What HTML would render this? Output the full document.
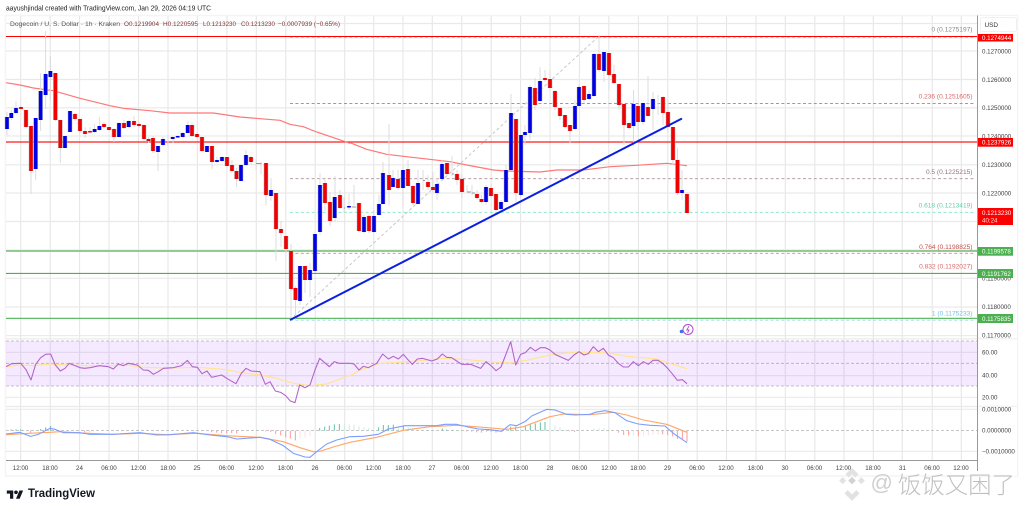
<!DOCTYPE html>
<html><head><meta charset="utf-8"><style>
html,body{margin:0;padding:0;background:#fff;width:1024px;height:509px;overflow:hidden}
svg{display:block;filter:blur(.35px)}
text{font-family:"Liberation Sans","Noto Sans CJK SC",sans-serif}
.a{font-size:6.2px;fill:#3f3f3f}
.t{font-size:6.2px;fill:#3f3f3f;text-anchor:middle}
.f{font-size:6.6px;text-anchor:end}
.w{font-size:6.2px;fill:#fff}
</style></head><body>
<svg width="1024" height="509" viewBox="0 0 1024 509" xmlns="http://www.w3.org/2000/svg">
<defs>
<path id="r" d="M21 107V109M26 110V127M31 126V171M55.4 73V120M60.3 120V148M75 114V119M80 119V131M85 131V134M90 131V132.5M104 124V127M109 127V130M114 129V137M124 123V128M134 121V125M139 124V126M144 125V139M148.5 139V141M153 138V151M192 125V136M197 134V137M202 137V151M212 146V162M227 157V166M232 165V171M236.5 171V179M251 157V162M266 163V195M276 193V229M281 229V233M286 236V249M291 251V289M295.5 288V300M305 266V280M325 183V203M330 202V221M340 195V208M359 203V231M369 216V231M389 175V190M398 179V188M408 169V186M413 186V203M428 182V187M433 187V190M447 163V174M457 174V180M462 179V192M477 194V198M481.5 199V202M491 188V196M496 194V210M516 119V193M535 88V105M545 78V80M550 79V88M555 91V107M560 108V116M565 115V127M570 125V131M584 86V100M599 54V70M609 53V75M614 74V83M619 84V105M624 104V125M629 123V128M638 106V122M648 107V116M663 97V113M668 112V127M673 127V160M677.5 160V193M687 194V213"/>
<path id="b" d="M7 117V129M11.3 113V118M16 108V113M35.7 118V169M40.6 91V120M45.6 74V95M50.4 71V77M65 136V148M70 111V132M94.6 129V132M99.4 126V130M119 123V137M128.7 121V127M158 146V152M163 139V145M172.7 137V139M177.7 136V137.5M182.7 133V137M187.7 125V133M207 146V152M217 160V162M222 157V161M241 165V181M246 155V165M271 190V196M300 266V301M310 270V280M315 234V271M320 185V232M334.7 197V218M349 206V207.5M364 217V232M374 216V232M379 204V215M383 173V204M393 178V187M403 170V188M418 183V204M437 184V193M442 164V179M486 187V202M501 202V209M506 170V202M511 113V170M521 135V195M525 132V135M530 87V133M540 81V101M575 106V129M579 87V106M589 94V99M594 54V96M604 52V71M633.5 104V126M643 103V122M653 99V109M682 190V193"/>
</defs>

<!-- frame -->
<rect x="5.5" y="15.5" width="1012" height="460.5" fill="#fff" stroke="#f4f4f4" stroke-width="1.5"/>

<!-- grid -->
<path fill="none" stroke="#e6e6e6" stroke-width="1.1" d="M20.7 16V460M50.2 16V460M79.6 16V460M109 16V460M138.5 16V460M168 16V460M197.4 16V460M226.9 16V460M256.3 16V460M285.8 16V460M315.2 16V460M344.7 16V460M373.7 16V460M403 16V460M432.3 16V460M461.8 16V460M491.2 16V460M520.6 16V460M550 16V460M579.4 16V460M608.8 16V460M638.4 16V460M667.8 16V460M697.2 16V460M726.5 16V460M756 16V460M785.3 16V460M814.8 16V460M844 16V460M873.3 16V460M902.3 16V460M932.2 16V460M961.3 16V460"/>
<path fill="none" stroke="#e9e9e9" stroke-width="1.2" d="M6 23.5H977M6 51H977M6 79.5H977M6 107.8H977M6 136H977M6 164.8H977M6 193H977M6 221.5H977M6 250H977M6 278.3H977M6 307H977M6 335.7H977M6 338.8H977M6 352.3H977M6 375.7H977M6 397.3H977M6 406.5H977M6 409.3H977M6 451.3H977"/>

<!-- RSI band -->
<rect x="6" y="341" width="971" height="45" fill="#a030ff" fill-opacity=".105"/>
<path fill="none" stroke="#b9a6c4" stroke-width=".8" stroke-dasharray="3 2" d="M6 341H977M6 363.3H977M6 386H977"/>
<path fill="none" stroke="#b5b5b5" stroke-width=".8" stroke-dasharray="3 2" d="M6 430.5H977"/>

<!-- Fib lines -->
<g fill="none" stroke-width=".9" stroke-dasharray="3 2.4">
<path stroke="#aaa" d="M290 37H975"/>
<path stroke="#e57b7b" d="M290 103.5H975"/>
<path stroke="#b08f97" d="M290 178.7H975"/>
<path stroke="#7fe3c4" d="M290 212.3H975"/>
<path stroke="#ee7f7f" d="M290 253.3H975"/>
<path stroke="#9fd5ef" d="M290 320.2H975"/>
<path stroke="#c2c2c2" d="M290 320L598 37"/>
</g>

<!-- Horizontal levels -->
<path fill="none" stroke="#f00" stroke-width="1.1" d="M6 36.5H977"/>
<path fill="none" stroke="#fa1f1f" stroke-width="1.3" d="M6 142H977"/>
<path fill="none" stroke="#85c588" stroke-width="1.8" d="M6 251H977"/>
<path fill="none" stroke="#4caf50" stroke-width="1.1" d="M6 273.4H977"/>
<path fill="none" stroke="#62bb66" stroke-width="1.2" d="M6 318.4H977"/>

<!-- MA -->
<g fill="none" stroke="#f77">
<polyline transform="scale(.33333)" stroke-width="3.6" points="18,248 60,255 100,264 160,272 240,295 330,317 370,325 450,332 510,339 640,339 720,351 840,361 870,373 910,380 950,396 1050,430"/>
<polyline transform="translate(350,20) scale(.33333)" stroke-width="3.6" points="0,368 50,388 110,403 170,410 300,425 350,435 430,450 470,453 570,456 620,450 700,450 780,440 860,436 950,430 1011,437"/>
</g>

<!-- Wicks -->
<path fill="none" stroke="#dcdcdc" stroke-width="1" d="M7 112V135M11.3 110V120M16 101V114M21 105V110M26 110V128M31 126V194M35.7 118V180M40.6 73V131M45.6 31V109M50.4 56V100M55.4 73V121M60.3 120V163M65 136V148M70 111V132M75 113V121M80 119V133M85 127V138M90 127V133M94.6 124V133M99.4 117V131M104 122V128M109 127V131M114 128V142M119 122V137M124 120V129M129 120V128M134 116V127M139 122V128M144 124V140M148.5 137V143M153 136V153M158 146V171M163 137V146M168 135V146M173 136V143M178 135V138M183 132V138M188 121V133M192 123V137M197 132V138M202 137V152M207 146V152M212 146V169M217 157V163M222 156V162M227 157V168M232 160V172M236.5 168V187M241 164V181M246 150V166M251 156V165M256 159V170M261 162V174M266 163V205M271 178V201M276 193V261M281 221V247M286 243V253M291 244V320M295.5 286V320M300 266V305M305 266V293M310 263V297M315 234V272M320 173V235M325 179V211M330 192V226M335 176V222M340 190V209M344 197V213M349 194V210M354 185V206M359 203V232M364 215V233M369 215V233M374 210V233M379 195V215M383 162V204M389 124V205M393 170V187M398 170V190M403 165V207M408 160V186M413 185V205M418 170V204M423 170V190M428 175V190M433 172V192M437 178V200M442 160V180M447 163V175M452 156V176M457 170V185M462 175V198M467 185V192M472 185V195M477 190V200M481.5 195V203M486 185V205M491 185V198M496 194V211M501 200V210M506 165V202M511 94V170M516 119V202M521 135V196M525 125V145M530 85V140M535 78V110M540 67V102M545 70V82M550 70V90M555 90V110M560 108V120M565 115V128M570 125V143M575 100V130M579 85V107M584 85V103M589 90V100M594 53V97M599 35V72M604 52V82M609 53V90M614 65V84M619 84V110M624 104V145M629 123V130M633.5 90V146M638 105V130M643 103V125M648 76V117M653 92V130M658 95V115M663 96V125M668 100V133M673 127V165M677.5 148V195M682 170V200M687 192V213"/>
<path fill="none" stroke="#999" stroke-width="1" d="M256 163.5H261.5M344 208H345M352 207H356M452 174H454M467 192H471M472 193H475M423 180.5H425"/>

<!-- Candle edges & bodies -->
<use href="#r" fill="none" stroke="#a8a8a8" stroke-width="4.4"/>
<use href="#b" fill="none" stroke="#a8a8a8" stroke-width="4.4"/>
<use href="#r" fill="none" stroke="#f00000" stroke-width="3.5"/>
<use href="#b" fill="none" stroke="#0000e6" stroke-width="3.5"/>

<!-- Trend line -->
<path d="M290 320L682 118.5" fill="none" stroke="#0b1fe0" stroke-width="2"/>

<!-- Lightning icon -->
<circle cx="688" cy="329.5" r="5" fill="#fff" stroke="#b04cc8" stroke-width="1"/>
<circle cx="681.5" cy="331.5" r="1.8" fill="#3f6ff0"/>
<path d="M689 326.2L686.7 330H689L687.5 333" fill="none" stroke="#b04cc8" stroke-width=".9"/>

<!-- RSI -->
<g fill="none" stroke-linejoin="round">
<polyline transform="translate(0,335) scale(.33333)" stroke="#ffe58f" stroke-width="3.6" points="18,95 60,90 100,92 150,87 200,90 260,92 320,92 380,90 430,97 500,99 590,97 670,103 720,112 780,120 830,130 880,145 930,152 980,147 1020,132 1050,120"/>
<polyline transform="translate(350,335) scale(.33333)" stroke="#ffe58f" stroke-width="3.6" points="0,122 30,105 60,95 90,85 130,83 200,78 280,70 340,73 420,80 480,84 530,76 600,60 650,54 700,52 770,53 830,64 920,72 960,85 1011,101"/>
<polyline transform="translate(0,335) scale(.33333)" stroke="#b163c9" stroke-width="3.2" points="18,95 35,86 62,85 78,104 93,135 107,88 122,68 137,58 152,57 166,90 181,108 195,100 208,85 225,92 240,98 254,100 270,98 298,92 325,95 340,102 355,87 370,92 385,85 412,90 430,105 445,106 460,118 475,110 490,100 520,98 545,92 562,76 577,95 592,97 606,116 621,108 635,127 665,120 680,130 708,146 724,115 738,100 753,108 780,110 796,148 810,140 826,168 842,172 857,182 871,198 885,203 899,150 915,158 930,150 945,105 959,70 988,95 1003,80 1018,85 1050,85"/>
<polyline transform="translate(350,335) scale(.33333)" stroke="#b163c9" stroke-width="3.2" points="0,85 12,87 27,105 40,94 55,98 80,85 98,57 115,72 130,64 145,72 160,58 172,72 187,88 202,72 218,70 245,78 262,72 277,57 290,67 305,68 320,78 335,88 362,88 392,100 408,80 423,92 438,107 453,96 467,60 482,20 497,90 512,58 526,53 541,37 556,48 571,38 585,38 600,45 615,58 630,65 655,76 672,60 687,50 702,60 715,56 730,35 745,50 760,40 775,60 790,68 805,85 820,96 835,96 850,80 865,92 880,80 895,88 909,76 924,76 940,87 953,100 968,118 982,136 997,134 1011,146"/>
</g>

<!-- MACD histogram -->
<g transform="translate(0,335) scale(.33333)" fill="none" stroke-width="3">
<path stroke="#5cc4a8" d="M33 287V283M48 287V283M62 287V283M122 287V282M137 287V277M152 287V273M959 287V279M974 287V275M988 287V272M1003 287V268M1018 287V267"/>
<path stroke="#c8ece3" d="M1033 287V267M1048 287V269"/>
<path stroke="#f99" d="M92 287V295M254 287V292M269 287V290M635 287V292M650 287V293M665 287V294M680 287V295M695 287V294M710 287V295M797 287V289M812 287V291M827 287V297M842 287V301M857 287V307M871 287V311M886 287V316"/>
<path stroke="#fde0e0" d="M900 287V311M915 287V307M930 287V304M945 287V297"/>
</g>
<g transform="translate(350,335) scale(.33333)" fill="none" stroke-width="3">
<path stroke="#c8ece3" d="M12 287V269M27 287V274M42 287V277M56 287V279M145 287V274M175 287V277M188 287V279M512 287V277M600 287V263M615 287V272M630 287V277M732 287V280M747 287V280M762 287V279"/>
<path stroke="#5cc4a8" d="M86 287V277M100 287V270M115 287V270M130 287V269M160 287V274M277 287V281M290 287V284M306 287V285M482 287V275M497 287V275M526 287V275M541 287V269M556 287V265M571 287V262M585 287V261"/>
<path stroke="#f99" d="M350 287V289M365 287V290M380 287V292M394 287V293M409 287V290M423 287V291M438 287V293M453 287V289M645 287V288M659 287V289M674 287V291M806 287V293M821 287V300M836 287V302M865 287V304M938 287V298M953 287V300M968 287V304M982 287V312M997 287V312M1011 287V320"/>
<path stroke="#fde0e0" d="M850 287V302M880 287V302M895 287V302M909 287V300M924 287V299"/>
</g>

<!-- MACD lines -->
<g fill="none" stroke-linejoin="round">
<polyline transform="translate(0,335) scale(.33333)" stroke="#ffa769" stroke-width="3.4" points="18,299 90,295 150,292 180,290 240,294 340,298 420,295 500,299 590,295 680,302 780,307 850,320 900,338 940,350 960,349 1000,336 1050,322"/>
<polyline transform="translate(350,335) scale(.33333)" stroke="#ffa769" stroke-width="3.4" points="0,322 80,307 160,286 240,275 320,271 400,277 470,283 520,275 600,245 640,237 720,239 790,232 830,240 880,255 950,268 1011,292"/>
<polyline transform="translate(0,335) scale(.33333)" stroke="#7b9dff" stroke-width="3.2" points="18,297 60,292 92,304 115,298 150,280 165,283 190,293 240,293 270,298 340,298 420,293 470,300 510,299 580,293 630,300 680,305 710,312 780,307 810,313 850,332 880,355 915,366 930,367 950,350 980,327 1010,315 1050,305"/>
<polyline transform="translate(350,335) scale(.33333)" stroke="#7b9dff" stroke-width="3.2" points="0,305 40,304 85,298 115,282 165,272 260,272 285,268 320,268 350,275 385,282 420,284 455,289 480,269 500,272 525,260 545,243 590,223 615,225 650,238 675,240 720,238 735,232 765,227 795,233 830,257 865,267 900,271 945,273 970,295 1011,323"/>
</g>

<!-- Axes -->
<rect x="978" y="16" width="39" height="460" fill="#fff"/>
<path d="M977.5 15.5V471" stroke="#999" stroke-width="1" fill="none"/>
<path d="M6 460.5H977.5" stroke="#999" stroke-width="1" fill="none"/>
<path d="M978 338.8H1017M978 406.3H1017" stroke="#eee" stroke-width="1" fill="none"/>
<rect x="980.5" y="17.5" width="36" height="14" rx="2" fill="#fff" stroke="#f0f0f0"/>
<text x="984.5" y="27" font-size="6.4" fill="#333">USD</text>

<!-- Price labels -->
<g class="labels">
<text class="a" x="982" y="53.3">0.1270000</text>
<text class="a" x="982" y="81.8">0.1260000</text>
<text class="a" x="982" y="110">0.1250000</text>
<text class="a" x="982" y="138.3">0.1240000</text>
<text class="a" x="982" y="166.8">0.1230000</text>
<text class="a" x="982" y="195.3">0.1220000</text>
<text class="a" x="982" y="280.5">0.1190000</text>
<text class="a" x="982" y="308.8">0.1180000</text>
<text class="a" x="982" y="337.3">0.1170000</text>
<text class="a" x="982" y="354.5">60.00</text>
<text class="a" x="982" y="377.5">40.00</text>
<text class="a" x="982" y="399.5">20.00</text>
<text class="a" x="982" y="411.5">0.0010000</text>
<text class="a" x="982" y="432.6">0.0000000</text>
<text class="a" x="982" y="453.5">−0.0010000</text>
</g>
<rect x="978" y="34" width="35" height="7.5" fill="#f00"/>
<text class="w" x="982" y="40">0.1274944</text>
<rect x="978" y="138" width="35" height="8.7" fill="#f00"/>
<text class="w" x="982" y="144.6">0.1237926</text>
<rect x="978" y="208" width="35" height="17" fill="#f00"/>
<text class="w" x="982" y="215">0.1213230</text>
<text class="w" x="982" y="222.5" fill-opacity=".85">40:24</text>
<rect x="978" y="247" width="35" height="8.7" fill="#4caf50"/>
<text class="w" x="982" y="253.6">0.1199578</text>
<rect x="978" y="269" width="35" height="9" fill="#4caf50"/>
<text class="w" x="982" y="275.8">0.1191762</text>
<rect x="978" y="314" width="35" height="9" fill="#4caf50"/>
<text class="w" x="982" y="320.8">0.1175835</text>

<!-- Fib labels -->
<text class="f" x="972.5" y="31.7" fill="#8a8a8a">0 (0.1275197)</text>
<text class="f" x="972.5" y="98.5" fill="#d86a6a">0.236 (0.1251605)</text>
<text class="f" x="972.5" y="173.8" fill="#96747a">0.5 (0.1225215)</text>
<text class="f" x="972.5" y="207.6" fill="#5ccfab">0.618 (0.1213419)</text>
<text class="f" x="972.5" y="248.8" fill="#c65050">0.764 (0.1198825)</text>
<text class="f" x="972.5" y="268.3" fill="#d86a6a">0.832 (0.1192027)</text>
<text class="f" x="972.5" y="315.6" fill="#74bfe3">1 (0.1175233)</text>

<!-- Time labels -->
<text class="t" x="20.5" y="469.8">12:00</text>
<text class="t" x="50" y="469.8">18:00</text>
<text class="t" x="79.5" y="469.8">24</text>
<text class="t" x="109" y="469.8">06:00</text>
<text class="t" x="138.5" y="469.8">12:00</text>
<text class="t" x="168" y="469.8">18:00</text>
<text class="t" x="197" y="469.8">25</text>
<text class="t" x="226.5" y="469.8">06:00</text>
<text class="t" x="256" y="469.8">12:00</text>
<text class="t" x="285.5" y="469.8">18:00</text>
<text class="t" x="315" y="469.8">26</text>
<text class="t" x="344.5" y="469.8">06:00</text>
<text class="t" x="373.5" y="469.8">12:00</text>
<text class="t" x="403" y="469.8">18:00</text>
<text class="t" x="432" y="469.8">27</text>
<text class="t" x="461.5" y="469.8">06:00</text>
<text class="t" x="491" y="469.8">12:00</text>
<text class="t" x="520.5" y="469.8">18:00</text>
<text class="t" x="550" y="469.8">28</text>
<text class="t" x="579.5" y="469.8">06:00</text>
<text class="t" x="609" y="469.8">12:00</text>
<text class="t" x="638" y="469.8">18:00</text>
<text class="t" x="667.5" y="469.8">29</text>
<text class="t" x="697" y="469.8">06:00</text>
<text class="t" x="726" y="469.8">12:00</text>
<text class="t" x="755.5" y="469.8">18:00</text>
<text class="t" x="785" y="469.8">30</text>
<text class="t" x="814.5" y="469.8">06:00</text>
<text class="t" x="843.5" y="469.8">12:00</text>
<text class="t" x="873" y="469.8">18:00</text>
<text class="t" x="902.5" y="469.8">31</text>
<text class="t" x="932" y="469.8">06:00</text>
<text class="t" x="961" y="469.8">12:00</text>

<!-- Header text -->
<text x="6" y="10.7" font-size="7" fill="#222" textLength="205" lengthAdjust="spacingAndGlyphs">aayushjindal created with TradingView.com, Jan 29, 2026 04:19 UTC</text>
<text x="10" y="25.8" font-size="6.3" fill="#555" textLength="110" lengthAdjust="spacingAndGlyphs">Dogecoin / U. S. Dollar · 1h · Kraken</text>
<g font-size="6.3" fill="#7d3a3a">
<text x="124" y="25.8" textLength="35" lengthAdjust="spacingAndGlyphs">O0.1219904</text>
<text x="163" y="25.8" textLength="35" lengthAdjust="spacingAndGlyphs">H0.1220595</text>
<text x="203" y="25.8" textLength="33" lengthAdjust="spacingAndGlyphs">L0.1213230</text>
<text x="241" y="25.8" textLength="34" lengthAdjust="spacingAndGlyphs">C0.1213230</text>
<text x="278" y="25.8" textLength="62" lengthAdjust="spacingAndGlyphs">−0.0007939 (−0.65%)</text>
</g>

<!-- TradingView logo -->
<g transform="translate(6.8,488.6) scale(.46)" fill="#131722">
<path d="M14 22H7V11H0V4h14v18zM28 22h-8l7.5-18h8L28 22z"/>
<circle cx="20" cy="8" r="4"/>
</g>
<text x="28" y="497" font-size="11.6" font-weight="bold" fill="#131722" textLength="67" lengthAdjust="spacingAndGlyphs">TradingView</text>

<!-- Watermark -->
<g fill="#e2e2e2" transform="translate(852,482) scale(1.35) translate(-852,-482)">
<path d="M852 471.5l4.8 4.8-2.4 2.4-2.4-2.4-2.4 2.4-2.4-2.4z"/>
<path d="M842.5 481l2.6-2.6 2.6 2.6-2.6 2.6zM856.3 481l2.6-2.6 2.6 2.6-2.6 2.6z"/>
<path d="M852 478.2l2.8 2.8-2.8 2.8-2.8-2.8z" fill="#d2d2d2"/>
<path d="M852 496l-5.6-5.6 2.4-2.4 3.2 3.2 3.2-3.2 2.4 2.4z"/>
</g>
<text x="870.5" y="490" font-size="22" fill="#cfcfcf">@</text>
<text x="898" y="493" font-size="23.4" fill="#c0c0c0" font-weight="300">饭饭又困了</text>
</svg>
</body></html>
